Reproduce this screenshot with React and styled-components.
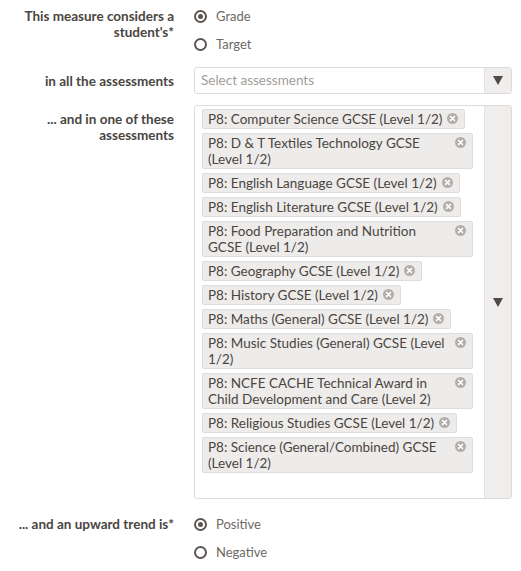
import React from "react";
import styled, { createGlobalStyle } from "styled-components";

const GlobalStyle = createGlobalStyle`
  html, body {
    margin: 0;
    padding: 0;
    background: #ffffff;
  }
  body {
    font-family: Lato, "Noto Sans", sans-serif;
    font-size: 13px;
    color: #4a4541;
  }
`;

const assessments = [
  "P8: Computer Science GCSE (Level 1/2)",
  "P8: D & T Textiles Technology GCSE (Level 1/2)",
  "P8: English Language GCSE (Level 1/2)",
  "P8: English Literature GCSE (Level 1/2)",
  "P8: Food Preparation and Nutrition GCSE (Level 1/2)",
  "P8: Geography GCSE (Level 1/2)",
  "P8: History GCSE (Level 1/2)",
  "P8: Maths (General) GCSE (Level 1/2)",
  "P8: Music Studies (General) GCSE (Level 1/2)",
  "P8: NCFE CACHE Technical Award in Child Development and Care (Level 2)",
  "P8: Religious Studies GCSE (Level 1/2)",
  "P8: Science (General/Combined) GCSE (Level 1/2)",
];

export default function App() {
  return (
    <>
      <GlobalStyle />
      <Form>
        <Row>
          <Label>This measure considers a student's*</Label>
          <Options>
            <Radio checked label="Grade" />
            <Radio label="Target" />
          </Options>
        </Row>

        <Row center>
          <Label center>in all the assessments</Label>
          <Select>
            <Placeholder>Select assessments</Placeholder>
            <ArrowBox>
              <Arrow />
            </ArrowBox>
          </Select>
        </Row>

        <Row>
          <Label>... and in one of these assessments</Label>
          <MultiSelect>
            <Tags>
              {assessments.map((a) => (
                <Tag key={a}>
                  {a}
                  <Remove>
                    <svg width="11" height="11" viewBox="0 0 11 11">
                      <circle cx="5.5" cy="5.5" r="5.5" fill="#b3afac" />
                      <path
                        d="M3.6 3.6 L7.4 7.4 M7.4 3.6 L3.6 7.4"
                        stroke="#ffffff"
                        strokeWidth="1.6"
                        strokeLinecap="round"
                      />
                    </svg>
                  </Remove>
                </Tag>
              ))}
              <SearchLine />
            </Tags>
            <ArrowBox>
              <Arrow />
            </ArrowBox>
          </MultiSelect>
        </Row>

        <Row>
          <Label>... and an upward trend is*</Label>
          <Options>
            <Radio checked label="Positive" />
            <Radio label="Negative" />
          </Options>
        </Row>
      </Form>
    </>
  );
}

function Radio({ checked, label }) {
  return (
    <Option>
      <Circle $checked={checked} />
      <span>{label}</span>
    </Option>
  );
}

const Form = styled.div`
  display: flex;
  flex-direction: column;
  gap: 11px;
  padding: 2px 9px 0 0;
  width: 512px;
`;

const Row = styled.div`
  display: grid;
  grid-template-columns: 174px 1fr;
  column-gap: 20px;
  align-items: ${(p) => (p.center ? "center" : "start")};
`;

const Label = styled.div`
  text-align: right;
  font-weight: 700;
  font-size: 13.5px;
  line-height: 16px;
  color: #4a4541;
  padding-top: ${(p) => (p.center ? "3px" : "6px")};
  padding-left: 10px;
`;

const Options = styled.div`
  display: flex;
  flex-direction: column;
  gap: 10px;
  padding-top: 5px;
`;

const Option = styled.label`
  display: flex;
  align-items: center;
  gap: 9px;
  height: 18px;
  font-size: 13px;
  color: #6e6864;
`;

const Circle = styled.span`
  width: 13px;
  height: 13px;
  box-sizing: border-box;
  border: 2px solid #5b5551;
  border-radius: 50%;
  display: flex;
  align-items: center;
  justify-content: center;
  &::after {
    content: "";
    width: 5px;
    height: 5px;
    border-radius: 50%;
    background: #5b5551;
    display: ${(p) => (p.$checked ? "block" : "none")};
  }
`;

const Select = styled.div`
  display: flex;
  height: 27px;
  box-sizing: border-box;
  border: 1px solid #dedbd8;
  border-radius: 3px;
  overflow: hidden;
  margin-top: 3px;
`;

const Placeholder = styled.div`
  flex: 1;
  padding: 0 6px;
  line-height: 25px;
  color: #a19c98;
  font-size: 13.5px;
`;

const ArrowBox = styled.div`
  width: 26px;
  flex: none;
  background: #efeeed;
  border-left: 1px solid #e4e2e0;
  display: flex;
  align-items: center;
  justify-content: center;
`;

const Arrow = styled.span`
  width: 0;
  height: 0;
  border-left: 5px solid transparent;
  border-right: 5px solid transparent;
  border-top: 9px solid #4f4a47;
`;

const MultiSelect = styled.div`
  display: flex;
  border: 1px solid #dedbd8;
  border-radius: 3px;
  overflow: hidden;
`;

const Tags = styled.div`
  flex: 1;
  display: flex;
  flex-direction: column;
  align-items: flex-start;
  gap: 4px;
  padding: 3px 11px 4px 7px;
`;

const Tag = styled.div`
  position: relative;
  background: #edeceb;
  border: 1px solid #dfdcda;
  border-radius: 2px;
  padding: 1px 22px 1px 5px;
  line-height: 16px;
  font-size: 13.5px;
  color: #4a4541;
`;

const Remove = styled.span`
  position: absolute;
  right: 6px;
  top: 3px;
  display: flex;
`;

const SearchLine = styled.div`
  height: 17px;
`;
